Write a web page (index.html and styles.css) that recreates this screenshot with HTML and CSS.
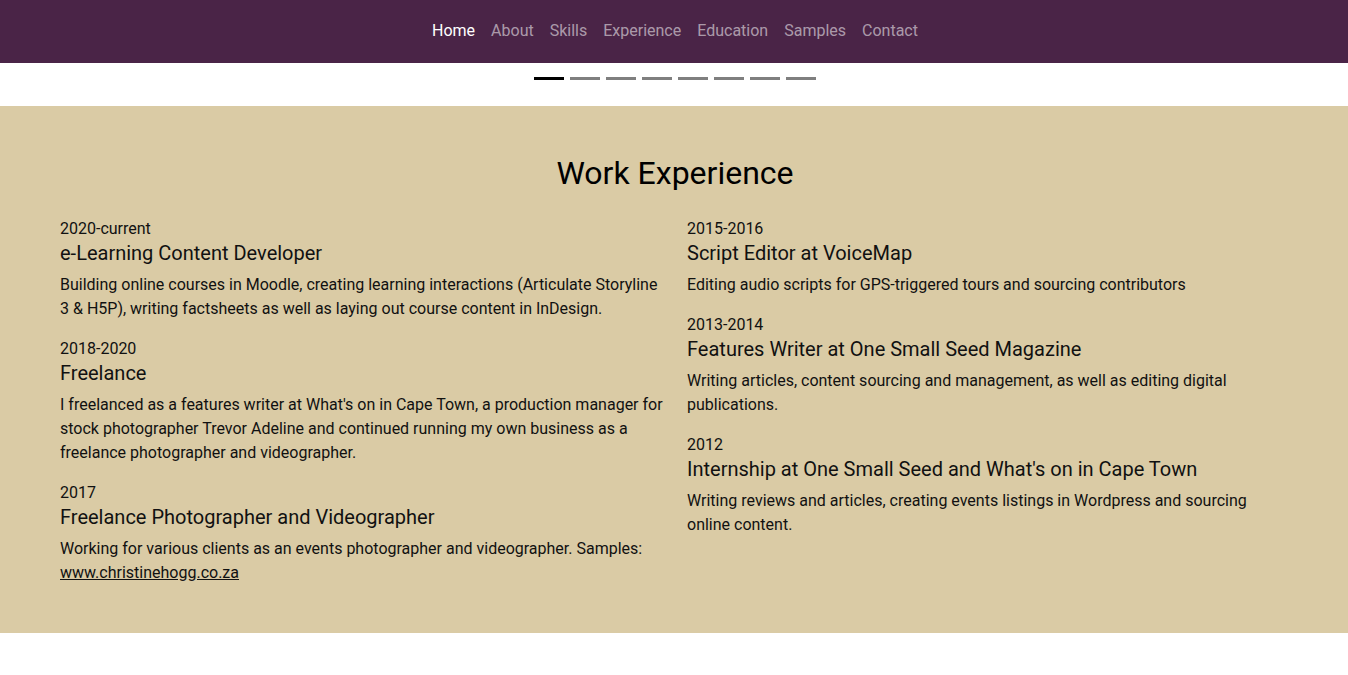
FILE: index.html
```html
<!DOCTYPE html>
<html lang="en">
<head>
<meta charset="utf-8">
<title>Work Experience</title>
<link rel="stylesheet" href="styles.css">
</head>
<body>
<nav class="navbar">
  <ul class="nav-list">
    <li><a class="nav-link active" href="#">Home</a></li>
    <li><a class="nav-link" href="#">About</a></li>
    <li><a class="nav-link" href="#">Skills</a></li>
    <li><a class="nav-link" href="#">Experience</a></li>
    <li><a class="nav-link" href="#">Education</a></li>
    <li><a class="nav-link" href="#">Samples</a></li>
    <li><a class="nav-link" href="#">Contact</a></li>
  </ul>
</nav>
<div class="indicators">
  <span class="ind active"></span>
  <span class="ind"></span>
  <span class="ind"></span>
  <span class="ind"></span>
  <span class="ind"></span>
  <span class="ind"></span>
  <span class="ind"></span>
  <span class="ind"></span>
</div>
<section class="experience">
  <h2 class="section-title">Work Experience</h2>
  <div class="columns">
    <div class="col">
      <div class="job">
        <div class="date">2020-current</div>
        <h5 class="job-title">e-Learning Content Developer</h5>
        <p class="desc">Building online courses in Moodle, creating learning interactions (Articulate Storyline 3 &amp; H5P), writing factsheets as well as laying out course content in InDesign.</p>
      </div>
      <div class="job">
        <div class="date">2018-2020</div>
        <h5 class="job-title">Freelance</h5>
        <p class="desc">I freelanced as a features writer at What's on in Cape Town, a production manager for stock photographer Trevor Adeline and continued running my own business as a freelance photographer and videographer.</p>
      </div>
      <div class="job">
        <div class="date">2017</div>
        <h5 class="job-title">Freelance Photographer and Videographer</h5>
        <p class="desc">Working for various clients as an events photographer and videographer. Samples: <a class="link" href="#">www.christinehogg.co.za</a></p>
      </div>
    </div>
    <div class="col">
      <div class="job">
        <div class="date">2015-2016</div>
        <h5 class="job-title">Script Editor at VoiceMap</h5>
        <p class="desc">Editing audio scripts for GPS-triggered tours and sourcing contributors</p>
      </div>
      <div class="job">
        <div class="date">2013-2014</div>
        <h5 class="job-title">Features Writer at One Small Seed Magazine</h5>
        <p class="desc">Writing articles, content sourcing and management, as well as editing digital publications.</p>
      </div>
      <div class="job">
        <div class="date">2012</div>
        <h5 class="job-title">Internship at One Small Seed and What's on in Cape Town</h5>
        <p class="desc">Writing reviews and articles, creating events listings in Wordpress and sourcing online content.</p>
      </div>
    </div>
  </div>
</section>
</body>
</html>
```

FILE: styles.css
```css
* { box-sizing: border-box; }
html, body { margin: 0; padding: 0; }
body {
  font-family: Roboto, "Liberation Sans", sans-serif;
  font-size: 16px;
  line-height: 24px;
  color: #111;
  background: #fff;
}
.navbar {
  background: #4a2447;
  height: 63px;
  padding: 11px 0 0 2px;
}
.nav-list {
  list-style: none;
  margin: 0;
  padding: 0;
  display: flex;
  justify-content: center;
}
.nav-link {
  display: block;
  padding: 8px 8px;
  color: rgba(255, 255, 255, 0.55);
  text-decoration: none;
  font-size: 16px;
  line-height: 24px;
}
.nav-link.active { color: #fff; }
.indicators {
  display: flex;
  justify-content: center;
  gap: 6px;
  padding: 14px 0 0 2px;
  height: 43px;
}
.ind {
  display: block;
  width: 30px;
  height: 3px;
  background: #000;
  opacity: 0.5;
}
.ind.active { opacity: 1; }
.experience {
  background: #dacba5;
  padding: 48px 46px 48px 48px;
}
.section-title {
  margin: 0 0 25px;
  text-align: center;
  font-size: 32px;
  font-weight: 400;
  line-height: 38px;
  color: #000;
}
.columns {
  display: flex;
}
.col {
  flex: 1 1 0;
  padding: 0 12px;
}
.date { font-size: 16px; line-height: 24px; }
.job-title {
  margin: 0 0 8px;
  font-size: 20px;
  font-weight: 400;
  line-height: 24px;
}
.desc {
  margin: 0 0 16px;
  font-size: 16px;
  line-height: 24px;
}
.col .job:last-child .desc { margin-bottom: 0; }
.link { color: #111; text-decoration: underline; }
```
